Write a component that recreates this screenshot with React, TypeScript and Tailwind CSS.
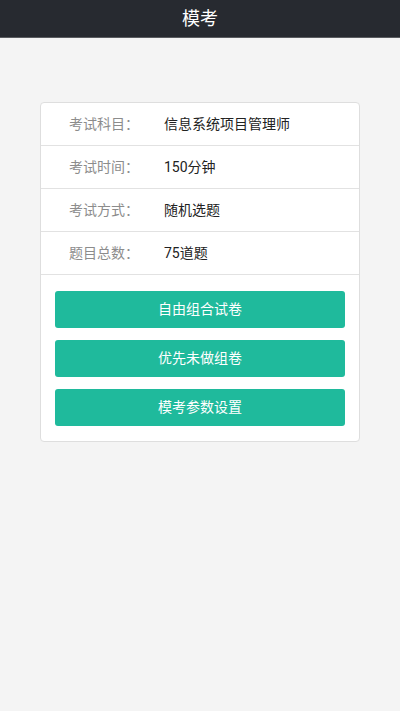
import React from 'react';

const font = "font-['Roboto','Noto_Sans_CJK_SC',sans-serif]";

const rows = [
  { label: '考试科目：', value: '信息系统项目管理师' },
  { label: '考试时间：', value: '150分钟' },
  { label: '考试方式：', value: '随机选题' },
  { label: '题目总数：', value: '75道题' },
];

const actions = ['自由组合试卷', '优先未做组卷', '模考参数设置'];

export default function App() {
  return (
    <div className={`min-h-[711px] w-[400px] bg-[#f4f4f4] ${font}`}>
      {/* header */}
      <div className="flex h-[38px] items-center justify-center bg-[#272a30] border-b border-[#5a5c60]">
        <span className="text-[18px] text-white">模考</span>
      </div>

      <div className="px-[40px] pt-[64px]">
        <div className="rounded-[4px] border border-[#dedede] bg-white">
          {rows.map((row) => (
            <div
              key={row.label}
              className="flex h-[43px] items-center border-b border-[#e2e2e2] pl-[28px]"
            >
              <span className="w-[95px] text-[14px] text-[#8c8c8c]">{row.label}</span>
              <span className="text-[14px] text-[#222]">{row.value}</span>
            </div>
          ))}

          <div className="flex flex-col gap-[12px] px-[14px] pt-[16px] pb-[15px]">
            {actions.map((a) => (
              <button
                key={a}
                className="h-[37px] w-full rounded-[3px] bg-[#1fba9c] text-[14px] text-white"
              >
                {a}
              </button>
            ))}
          </div>
        </div>
      </div>
    </div>
  );
}
